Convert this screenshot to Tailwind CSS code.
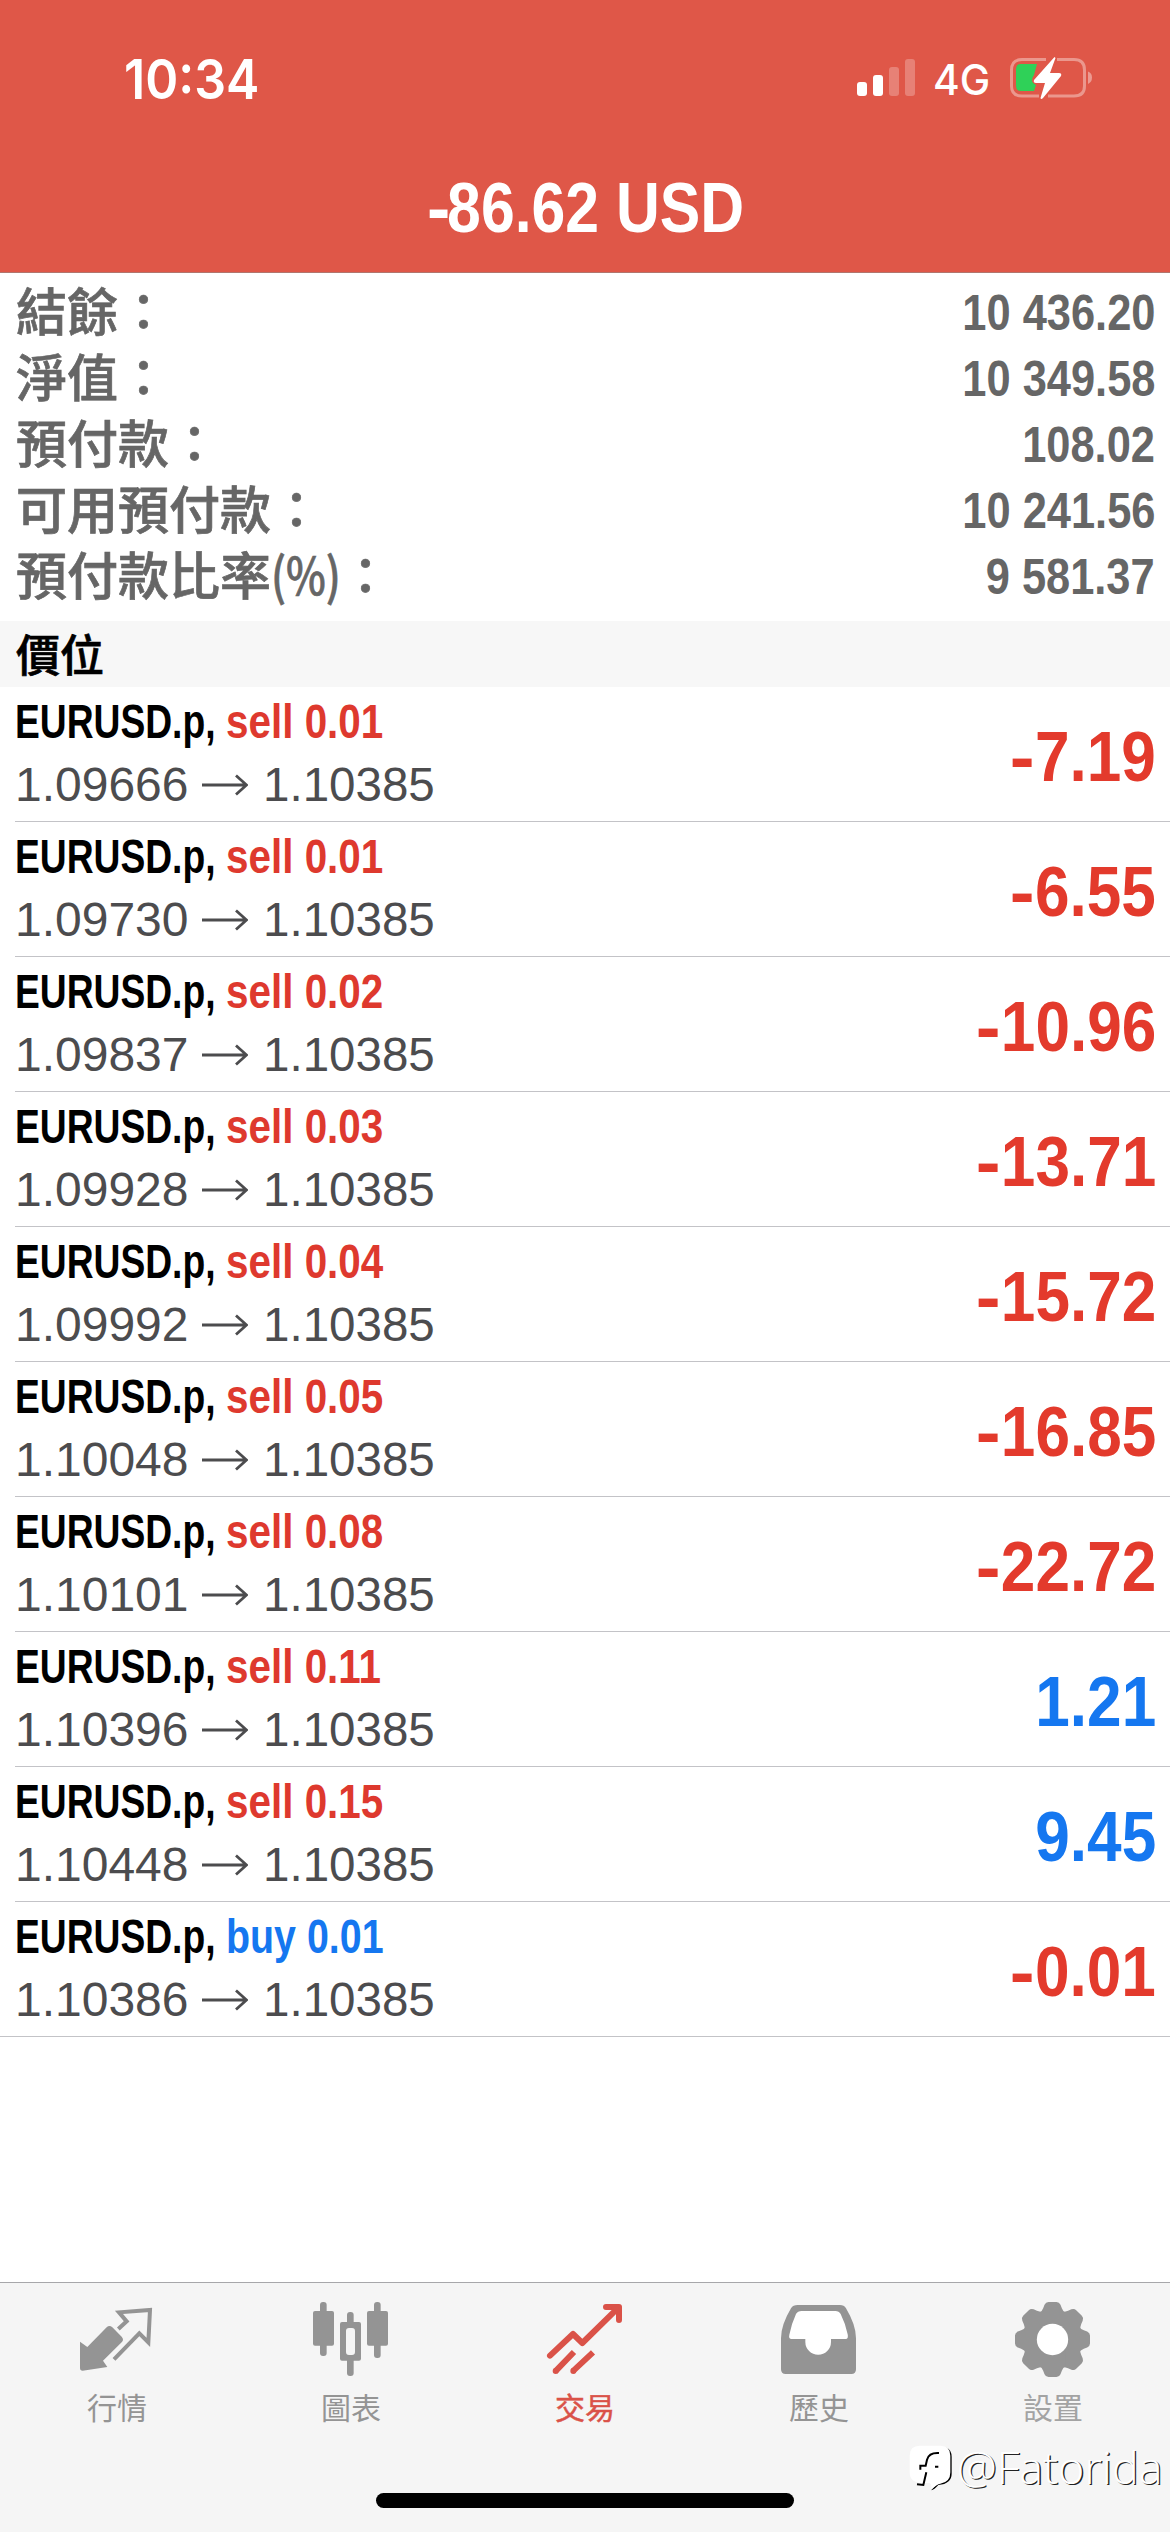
<!DOCTYPE html>
<html lang="zh-Hant">
<head>
<meta charset="utf-8">
<title>交易</title>
<script src="https://cdn.jsdelivr.net/npm/@tailwindcss/browser@4"></script>
</head>
<body class="bg-white">
<div class="relative flex h-[2532px] w-[1170px] flex-col overflow-hidden bg-white font-['Liberation_Sans','Noto_Sans_CJK_TC',sans-serif]">

  <header class="flex h-[273px] flex-col border-b border-[#b0766e] bg-[#df5748] text-white">
    <div class="flex h-[143px] items-start justify-between pr-[77px] pl-[124px]">
      <div class="mt-[44px] h-[70px] origin-left scale-x-[0.91] font-['Inter',sans-serif] text-[55px] leading-[70px] font-semibold whitespace-nowrap">10:34</div>
      <div class="flex items-start">
        <svg class="mt-[58px] h-[39px] w-[60px]" viewBox="0 0 60 39" fill="#fff">
          <rect x="1" y="24" width="10" height="14" rx="3"/>
          <rect x="17" y="17" width="10" height="21" rx="3"/>
          <rect x="33" y="9" width="10" height="29" rx="3" opacity=".25"/>
          <rect x="49" y="1" width="10" height="37" rx="3" opacity=".25"/>
        </svg>
        <div class="mt-[50px] ml-[17px] h-[60px] w-[60px] origin-left scale-x-[0.97] font-['Inter',sans-serif] text-[42px] leading-[60px] font-medium">4G</div>
        <svg class="mt-[56px] ml-[16px] h-[44px] w-[84px]" viewBox="0 0 84 44">
          <path d="M37 3.500H13Q2.500 3.500 2.500 14V30Q2.500 40 13 40H30M48 3.500H65Q75.500 3.500 75.500 14V30Q75.500 40 65 40H39" fill="none" stroke="#fff" stroke-opacity=".38" stroke-width="3"/>
          <path d="M79 15.500Q83 17 83 21.500T79 28Z" fill="#fff" fill-opacity=".4"/>
          <path d="M12 8H28L25 19Q20 26 27 29L25 35H12Q7 35 7 30V13Q7 8 12 8Z" fill="#2fd158"/>
          <path d="M45.500 1 25 24Q24 27 27 27H36L31.500 42Q32 44 34 42L52 20Q53 17 50 17H41L46.500 2Z" fill="#fff"/>
        </svg>
      </div>
    </div>
    <div class="flex h-[129px] justify-center">
      <div class="mt-[25px] h-[80px] origin-center scale-x-[0.855] text-[71px] leading-[80px] font-bold whitespace-nowrap"><span class="inline-block origin-left scale-x-[1.15]">-</span>86.62 USD</div>
    </div>
  </header>

  <section id="summary" class="flex h-[348px] flex-col pt-[3px] pr-[15px] pl-4 text-[#666666]"></section>

  <div class="flex h-[66px] items-center bg-[#f7f7f7] pl-4 font-['Noto_Sans_CJK_TC',sans-serif] text-[44px] leading-[64px] font-medium text-black [-webkit-text-stroke:0.7px_#000]"><span class="mt-[-3px]">價位</span></div>

  <main id="positions" class="flex flex-1 flex-col"></main>

  <nav class="flex h-[250px] border-t border-[#a7a7aa] bg-[#f5f5f5] pt-[18px] font-['Noto_Sans_CJK_TC',sans-serif] text-[30px] leading-[40px] text-[#949494]">
    <div class="flex flex-1 flex-col items-center gap-[7px]">
      <svg class="size-[78px]" viewBox="234 93 234 234">
        <path fill="#949494" d="M240 215 262 231 320 172Q328 164 337 172L365 200Q373 209 365 217L309 272 322 291 248 302Q240 302 240 294Z"/>
        <path fill="none" stroke="#949494" stroke-width="12" d="M355 177 380 154 357 127 450 120 445 217 418 190 342 268" stroke-linecap="butt"/>
      </svg>
      <span>行情</span>
    </div>
    <div class="flex flex-1 flex-col items-center gap-[7px]">
      <svg class="size-[78px]" viewBox="936 93 234 234" fill="#949494">
        <rect x="939" y="123" width="63" height="104" rx="6"/><rect x="960" y="96" width="20" height="162" rx="9"/>
        <rect x="1101" y="123" width="63" height="104" rx="6"/><rect x="1122" y="96" width="20" height="168" rx="9"/>
        <rect x="1041" y="126" width="20" height="40" rx="9"/><rect x="1041" y="262" width="20" height="56" rx="9"/>
        <path fill-rule="evenodd" d="M1026 156h51q6 0 6 6v104q0 6-6 6h-51q-6 0-6-6V162q0-6 6-6ZM1047 174q-9 0-9 9v63q0 9 9 9h9q9 0 9-9v-63q0-9-9-9Z"/>
      </svg>
      <span>圖表</span>
    </div>
    <div class="flex flex-1 flex-col items-center gap-[7px] text-[#da5248]">
      <svg class="size-[78px]" viewBox="378 93 234 234" fill="none" stroke="#da5248" stroke-width="18">
        <path stroke-linecap="round" stroke-linejoin="round" d="M390 257 459 192 487 219 592 116M558 111H597V150"/>
        <path fill="#da5248" stroke="none" d="M570 110H606V140Z"/>
        <path d="M406 304 462 246M458 304 519 247"/>
        <circle cx="407" cy="303" r="9" fill="#da5248" stroke="none"/><circle cx="460" cy="303" r="9" fill="#da5248" stroke="none"/>
      </svg>
      <span class="[-webkit-text-stroke:0.5px_#da5248]">交易</span>
    </div>
    <div class="flex flex-1 flex-col items-center gap-[7px]">
      <svg class="size-[78px]" viewBox="1080 93 234 234">
        <path fill="#949494" d="M1133 105H1260Q1272 105 1278 115 1308 165 1308 205V298Q1308 312 1294 312H1097Q1083 312 1083 298V205Q1083 165 1113 115 1119 105 1133 105Z"/>
        <path fill="#fff" d="M1145 123H1246Q1257 123 1262 132 1276 160 1283 193 1286 207 1277 207H1233V216A38 38 0 0 1 1156 216V207H1115Q1105 207 1108 194 1115 160 1128 132 1133 123 1145 123Z"/>
      </svg>
      <span>歷史</span>
    </div>
    <div class="flex flex-1 flex-col items-center gap-[7px]">
      <svg class="size-[78px]" viewBox="402 93 234 234">
        <g fill="#949494" transform="translate(517.500 208.500)">
          <circle r="86"/>
          <g id="teeth"><path id="tooth" d="M-40-78Q-32-84-28-94L-24-104Q-20-112.500-12-112.500H12Q20-112.500 24-104L28-94Q32-84 40-78V0H-40Z"/>
          <use href="#tooth" transform="rotate(45)"/><use href="#tooth" transform="rotate(90)"/><use href="#tooth" transform="rotate(135)"/></g>
          <use href="#teeth" transform="rotate(180)"/>
          <circle r="47" fill="#fff"/>
        </g>
      </svg>
      <span class="text-[#a3a3a3]">設置</span>
    </div>
  </nav>

  <div class="absolute top-[2493px] left-[376px] h-[15px] w-[418px] rounded-full bg-black"></div>

  <div class="absolute top-[2445px] left-[909px] flex items-start">
    <svg class="h-[52px] w-[48px]" viewBox="0 0 144 156">
      <path transform="translate(4 4)" fill="#000" d="M84 116Q124 112 124 82V32Q124 10 108 4L94 60Q90 110 62 132Q72 130 84 116Z"/>
      <path fill="#fff" d="M32 2H94Q124 2 124 32V82Q124 112 94 116 84 117 66 134 70 120 62 114H36Q2 112 2 82V32Q2 2 32 2Z"/>
      <path fill="none" stroke="#000" stroke-width="6" d="M90 24Q60 22 54 44L50 62H34V74M52 82 43 120 24 118M78 65H88"/>
    </svg>
    <div class="mt-[-6px] h-[56px] origin-left scale-x-[1.02] font-['Open_Sans',sans-serif] text-[44px] leading-[56px] font-light whitespace-nowrap text-white [text-shadow:1.3px_1.3px_0.5px_#222]">@Fatorida</div>
  </div>
</div>

<script>
const pct = '<span class="inline-block w-[69px] origin-left scale-x-[0.83] whitespace-nowrap">(%)</span>';
document.getElementById('summary').innerHTML = [
  ['結餘：', '10 436.20'],
  ['淨值：', '10 349.58'],
  ['預付款：', '108.02'],
  ['可用預付款：', '10 241.56'],
  ['預付款比率' + pct + '：', '9 581.37'],
].map(([label, value]) => `
  <div class="flex h-[66px] justify-between leading-[66px]">
    <span class="font-['Noto_Sans_CJK_TC',sans-serif] text-[51px] font-medium whitespace-nowrap [-webkit-text-stroke:0.7px_#666666]">${label}</span>
    <span class="mt-[4px] h-[66px] origin-right scale-x-[0.868] text-[50px] font-bold whitespace-nowrap">${value}</span>
  </div>`).join('');

const arrow = '<svg class="mr-[15px] ml-[16px] mt-[22px] h-[22px] w-[46px]" viewBox="0 0 46 22" fill="none" stroke="#4c4c4e" stroke-width="2.8"><path d="M0 11H44M34 1.500 44.500 11 34 20.500"/></svg>';
document.getElementById('positions').innerHTML = [
  ['sell', '0.01', '1.09666', '-7.19'],
  ['sell', '0.01', '1.09730', '-6.55'],
  ['sell', '0.02', '1.09837', '-10.96'],
  ['sell', '0.03', '1.09928', '-13.71'],
  ['sell', '0.04', '1.09992', '-15.72'],
  ['sell', '0.05', '1.10048', '-16.85'],
  ['sell', '0.08', '1.10101', '-22.72'],
  ['sell', '0.11', '1.10396', '1.21'],
  ['sell', '0.15', '1.10448', '9.45'],
  ['buy', '0.01', '1.10386', '-0.01'],
].map(([side, lots, open, profit], i, all) => `
  <div class="${i === all.length - 1 ? 'pl-[15px]' : 'ml-[15px]'} flex h-[135px] justify-between border-b border-[#c3c3c7] pt-[5px] pr-[14px]">
    <div>
      <div class="flex h-[60px] text-[48px] leading-[60px] font-bold whitespace-nowrap">
        <span class="w-[211px] origin-left scale-x-[0.775] text-black">EURUSD.p,</span>
        <span class="${side === 'buy' ? 'scale-x-[0.82] text-[#1577f0]' : 'scale-x-[0.842] text-[#de392e]'} origin-left">${side} ${lots}</span>
      </div>
      <div class="flex h-[66px] text-[48px] leading-[66px] text-[#4c4c4e]"><span class="w-[171px]">${open}</span>${arrow}<span class="origin-left scale-x-[0.99]">1.10385</span></div>
    </div>
    <div class="${profit[0] === '-' ? 'text-[#e33a2c]' : 'text-[#1577f0]'} mt-[25px] h-[80px] origin-right scale-x-[0.875] text-[71px] leading-[80px] font-bold whitespace-nowrap">${profit[0] === '-' ? '<span class="mr-[5px] inline-block origin-left scale-x-[1.2]">-</span>' : ''}${profit.replace('-', '')}</div>
  </div>`).join('');
</script>
</body>
</html>
